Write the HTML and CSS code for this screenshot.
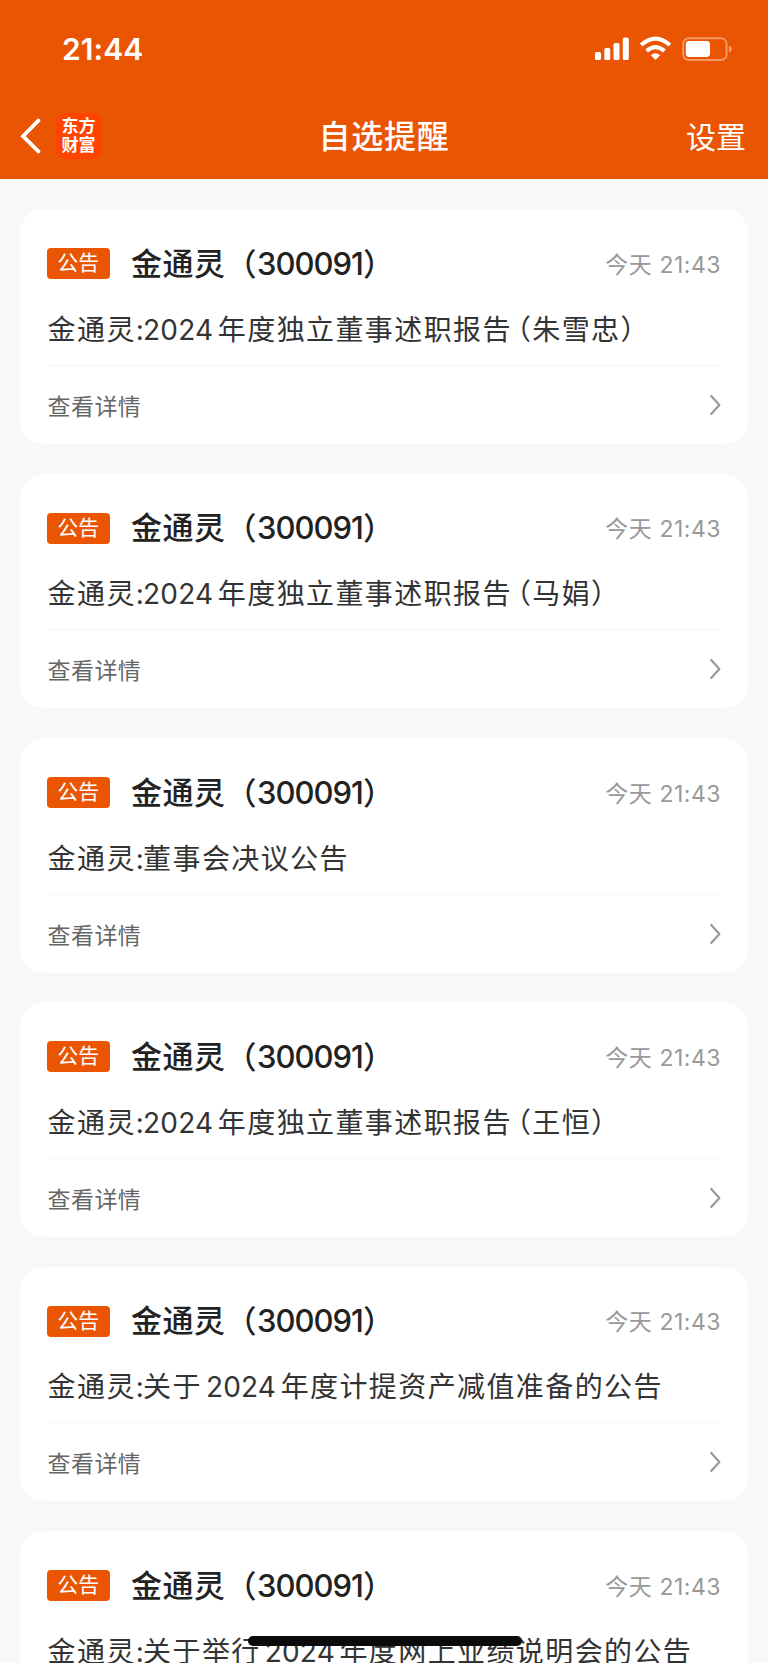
FILE: index.html
```html
<!DOCTYPE html>
<html lang="zh-CN">
  <head>
    <meta charset="utf-8" />
    <title>自选提醒</title>
    <meta name="viewport" content="width=device-width, initial-scale=1.0" />
    <link rel="stylesheet" href="styles.css">
  </head>
  <body>
    <svg class="sprite" aria-hidden="true">
      <symbol id="chevron" viewBox="0 0 12 22">
        <path d="M2.2 2 L10.4 11 L2.2 20" fill="none" stroke="#999" stroke-width="2.2" stroke-linecap="round" stroke-linejoin="round" />
      </symbol>
    </svg>

    <header class="header">
      <div class="status">
        <div class="clock">21:44</div>
        <svg class="status-icons" width="138" height="26" viewBox="0 0 138 26">
          <g fill="#fff">
            <rect x="0" y="16" width="6" height="8" rx="1.6" />
            <rect x="9.3" y="12" width="6" height="12" rx="1.6" />
            <rect x="18.5" y="7" width="6" height="17" rx="1.6" />
            <rect x="27.8" y="1.5" width="6" height="22.5" rx="1.6" />
            <path d="M60.5 24 L55.8 19.2 Q60.5 15.2 65.2 19.2 Z" />
            <rect x="90.8" y="5" width="24.2" height="16" rx="3.4" />
          </g>
          <g fill="none" stroke="#fff" stroke-width="4.2">
            <path d="M46.2 9 Q60.5 -3.8 74.8 9" />
            <path d="M51.6 15 Q60.5 7.2 69.4 15" />
          </g>
          <rect x="88.2" y="2.2" width="43.4" height="21.8" rx="5.5" fill="none" stroke="#fff" stroke-opacity="0.4" stroke-width="1.9" />
          <path d="M134 9.4 Q136.8 10.6 136.8 13 Q136.8 15.4 134 16.6 Z" fill="#fff" fill-opacity="0.45" />
        </svg>
      </div>
      <nav class="nav">
        <div class="nav-left">
          <svg class="back" width="22" height="36" viewBox="0 0 22 36">
            <path d="M18.4 2.6 L3 18.2 L18.4 33.4" fill="none" stroke="#fff" stroke-width="3.8" stroke-linecap="round" stroke-linejoin="miter" />
          </svg>
          <div class="logo"><span>东方</span><span>财富</span></div>
        </div>
        <h1 class="nav-title">自选提醒</h1>
        <div class="nav-right">设置</div>
      </nav>
    </header>

    <main class="list">
      <article class="card">
        <div class="card-head">
          <span class="badge">公告</span>
          <h2 class="name">金通灵（<span class="code">300091</span>）</h2>
          <span class="time">今天 <span class="hm">21:43</span></span>
        </div>
        <p class="text">金通灵<span class="colon">:</span><span class="year">2024</span>年度独立董事述职报告<span class="paren">（</span>朱雪忠）</p>
        <div class="more">查看详情<svg class="arrow"><use href="#chevron" /></svg></div>
      </article>

      <article class="card">
        <div class="card-head">
          <span class="badge">公告</span>
          <h2 class="name">金通灵（<span class="code">300091</span>）</h2>
          <span class="time">今天 <span class="hm">21:43</span></span>
        </div>
        <p class="text">金通灵<span class="colon">:</span><span class="year">2024</span>年度独立董事述职报告<span class="paren">（</span>马娟）</p>
        <div class="more">查看详情<svg class="arrow"><use href="#chevron" /></svg></div>
      </article>

      <article class="card">
        <div class="card-head">
          <span class="badge">公告</span>
          <h2 class="name">金通灵（<span class="code">300091</span>）</h2>
          <span class="time">今天 <span class="hm">21:43</span></span>
        </div>
        <p class="text">金通灵<span class="colon">:</span>董事会决议公告</p>
        <div class="more">查看详情<svg class="arrow"><use href="#chevron" /></svg></div>
      </article>

      <article class="card">
        <div class="card-head">
          <span class="badge">公告</span>
          <h2 class="name">金通灵（<span class="code">300091</span>）</h2>
          <span class="time">今天 <span class="hm">21:43</span></span>
        </div>
        <p class="text">金通灵<span class="colon">:</span><span class="year">2024</span>年度独立董事述职报告<span class="paren">（</span>王恒）</p>
        <div class="more">查看详情<svg class="arrow"><use href="#chevron" /></svg></div>
      </article>

      <article class="card">
        <div class="card-head">
          <span class="badge">公告</span>
          <h2 class="name">金通灵（<span class="code">300091</span>）</h2>
          <span class="time">今天 <span class="hm">21:43</span></span>
        </div>
        <p class="text">金通灵<span class="colon">:</span>关于<span class="year mid">2024</span>年度计提资产减值准备的公告</p>
        <div class="more">查看详情<svg class="arrow"><use href="#chevron" /></svg></div>
      </article>

      <article class="card">
        <div class="card-head">
          <span class="badge">公告</span>
          <h2 class="name">金通灵（<span class="code">300091</span>）</h2>
          <span class="time">今天 <span class="hm">21:43</span></span>
        </div>
        <p class="text">金通灵<span class="colon">:</span>关于举行<span class="year mid">2024</span>年度网上业绩说明会的公告</p>
        <div class="more">查看详情<svg class="arrow"><use href="#chevron" /></svg></div>
      </article>
    </main>

    <div class="home-bar"></div>
  </body>
</html>
```

FILE: styles.css
```css
* {
  box-sizing: border-box;
}

html,
body {
  height: 100%;
  overflow: hidden;
}

body {
  margin: 0;
  background: #f6f8fa;
  color: #333;
  font-family: Inter, "Noto Sans CJK SC", sans-serif;
}

h1,
h2,
p {
  margin: 0;
}

.sprite {
  display: none;
}

/* header */
.header {
  height: 179.4px;
  background: #ea5504;
  color: #fff;
}
.status {
  height: 98px;
  padding: 0 35px 0 62px;
  display: flex;
  align-items: center;
  justify-content: space-between;
}
.clock {
  font-size: 30px;
  font-weight: 600;
  line-height: 36px;
  letter-spacing: 0.1px;
}
.status-icons {
  display: block;
}
.nav {
  height: 76px;
  padding: 0 22px 0 20px;
  display: grid;
  grid-template-columns: 1fr auto 1fr;
  align-items: center;
}
.nav-left {
  display: flex;
  align-items: center;
}
.logo {
  width: 46px;
  height: 46px;
  margin-left: 13.5px;
  border-radius: 10px;
  background: #ff4400;
  display: flex;
  flex-direction: column;
  align-items: center;
  justify-content: center;
  font-size: 17px;
  font-weight: 700;
  line-height: 19.5px;
}
.nav-title {
  padding: 2px 0 0 2px;
  font-size: 32px;
  font-weight: 500;
  line-height: 40px;
  letter-spacing: 0.8px;
}
.nav-right {
  padding-top: 1px;
  text-align: right;
  font-size: 30px;
  line-height: 40px;
}

/* cards */
.list {
  padding: 29.9px 20px 0;
  display: flex;
  flex-direction: column;
  gap: 29.7px;
}
.card {
  height: 234.7px;
  flex: none;
  padding: 39px 27px 0;
  border-radius: 24px;
  background: #fff;
}
.card-head {
  height: 31px;
  display: flex;
  align-items: center;
}
.badge {
  width: 62.5px;
  height: 31px;
  border-radius: 4px;
  background: #ea5504;
  color: #fff;
  font-size: 21px;
  line-height: 30px;
  text-align: center;
}
.name {
  margin-left: 21.5px;
  color: #222;
  font-size: 31px;
  font-weight: 500;
  line-height: 40px;
  letter-spacing: 0.5px;
  white-space: nowrap;
}
.code {
  letter-spacing: -1px;
}
.time {
  margin-left: auto;
  padding-bottom: 2px;
  color: #999;
  font-size: 23px;
  letter-spacing: 0.6px;
  white-space: nowrap;
}
.hm {
  letter-spacing: 0.5px;
}
.text {
  margin-top: 30.5px;
  height: 55px;
  padding-left: 0.6px;
  font-size: 28px;
  line-height: 40px;
  letter-spacing: 1.4px;
  white-space: nowrap;
}
.colon {
  letter-spacing: -0.8px;
}
.year {
  margin-right: 4.5px;
  letter-spacing: 0.2px;
}
.year.mid {
  margin-left: 4px;
}
/* half-width opening bracket */
.paren {
  margin-left: 5px;
  font-feature-settings: "halt";
}
.more {
  height: 79px;
  padding-left: 0.6px;
  border-top: 1.5px solid #f4f5f7;
  display: flex;
  align-items: center;
  justify-content: space-between;
  color: #666;
  font-size: 23px;
  letter-spacing: 0.4px;
}
.arrow {
  width: 12px;
  height: 22px;
}

.home-bar {
  position: fixed;
  left: 248px;
  bottom: 17px;
  width: 274px;
  height: 10px;
  border-radius: 5px;
  background: #0b0b0b;
}
```
